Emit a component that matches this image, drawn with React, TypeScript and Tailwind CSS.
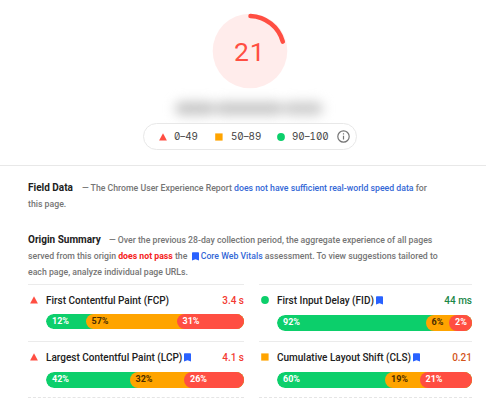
import clsx from "clsx";

type Level = "poor" | "average" | "good";

const metrics = [
  {
    name: "First Contentful Paint (FCP)",
    value: "3.4 s",
    level: "poor" as Level,
    valueColor: "text-[#f33a31]",
    vital: false,
    bar: [12, 57, 31],
    offsets: [0, 39.5, 130.5],
    barSize: "h-[15px]",
  },
  {
    name: "First Input Delay (FID)",
    value: "44 ms",
    level: "good" as Level,
    valueColor: "text-[#1b8748]",
    vital: true,
    bar: [92, 6, 2],
    offsets: [0, 148.5, 172],
    barSize: "mt-px h-[15.5px]",
  },
  {
    name: "Largest Contentful Paint (LCP)",
    value: "4.1 s",
    level: "poor" as Level,
    valueColor: "text-[#f33a31]",
    vital: true,
    bar: [42, 32, 26],
    offsets: [0, 83.5, 138],
    barSize: "mt-px h-[15.5px]",
  },
  {
    name: "Cumulative Layout Shift (CLS)",
    value: "0.21",
    level: "average" as Level,
    valueColor: "text-[#d3561c]",
    vital: true,
    bar: [60, 19, 21],
    offsets: [0, 108, 142.5],
    barSize: "mt-px h-[15.5px]",
  },
];

const segmentStyles = [
  "bg-[#0ccf6b] text-white",
  "bg-[#ffa400] text-[#4a2c00]",
  "bg-[#ff4e42] text-white",
];

const LevelIcon = ({ level }: { level: Level }) => (
  <svg width="8" height="8" viewBox="0 0 8 8" className="shrink-0">
    {level === "poor" && <path d="M4 0.3L7.9 7.6H0.1Z" fill="#ff4e42" />}
    {level === "average" && <path d="M0.2 0.4H7.6V7.6H0.2Z" fill="#ffa400" />}
    {level === "good" && <circle cx="4" cy="4" r="3.9" fill="#0ccf6b" />}
  </svg>
);

const Bookmark = ({ className }: { className?: string }) => (
  <svg width="7" height="9" viewBox="0 0 7 9" className={clsx("shrink-0", className)}>
    <path d="M0.8 0.3H6.2Q7 0.3 7 1V8.6L3.5 7.2L0 8.6V1Q0 0.3 0.8 0.3Z" fill="#2962ff" />
  </svg>
);

const Gauge = () => (
  <svg width="76" height="76" viewBox="0 0 76 76">
    <circle cx="38" cy="38" r="37.3" fill="#ffeceb" />
    <path
      d="M38.5 3A35 35 0 0 1 70.8 28.6"
      fill="none"
      stroke="#ff4e42"
      strokeWidth="4.5"
      strokeLinecap="round"
    />
    <text
      x="37.8"
      y="48.3"
      textAnchor="middle"
      fill="#ff4e42"
      className="font-['Roboto',sans-serif] text-[26.5px] tracking-[1px]"
    >
      21
    </text>
  </svg>
);

const Legend = () => (
  <div className="flex h-[27px] w-[214px] items-center rounded-full border border-[#e8e8e8] bg-white pl-[14.5px] font-['Inter',sans-serif] text-[9.8px] text-[#424242] slashed-zero tabular-nums">
    <LevelIcon level="poor" />
    <span className="ml-[7.5px] w-[41px] pt-[2px]">0–49</span>
    <LevelIcon level="average" />
    <span className="ml-[8px] w-[46px] pt-[2px]">50–89</span>
    <LevelIcon level="good" />
    <span className="ml-[7px] w-[45px] pt-[2px]">90–100</span>
    <svg width="13" height="13" viewBox="0 0 13 13" fill="none" stroke="#757575">
      <circle cx="6.5" cy="6.5" r="5.7" strokeWidth="1.2" />
      <path d="M6.5 5.7V9.6M6.5 3.3V4.6" strokeWidth="1.2" />
    </svg>
  </div>
);

const Metric = ({ metric }: { metric: (typeof metrics)[number] }) => (
  <div className="h-[57px] border-t border-[#ebebeb]">
    <div className="flex h-[29px] items-center pt-px pl-[2px]">
      <LevelIcon level={metric.level} />
      <span className="ml-[8px] text-[10px] font-medium text-[#212121]">{metric.name}</span>
      {metric.vital && <Bookmark className="ml-[2px]" />}
      <span className={clsx("ml-auto text-[10px] font-medium", metric.valueColor)}>
        {metric.value}
      </span>
    </div>
    <div className={clsx("relative ml-[18px] overflow-hidden rounded-full", metric.barSize)}>
      {metric.bar.map((percent, i) => (
        <div
          key={i}
          className={clsx(
            "absolute inset-y-0 right-0 flex items-center rounded-l-full pl-[6px] text-[9px] font-bold",
            segmentStyles[i]
          )}
          style={{ left: metric.offsets[i] }}
        >
          {percent}%
        </div>
      ))}
    </div>
  </div>
);

const App = () => {
  return (
    <div className="h-[412px] w-[486px] overflow-hidden bg-white font-['Roboto',sans-serif] whitespace-nowrap">
      {/* Score */}
      <div className="flex h-[166px] flex-col items-center border-b border-[#e8e8e8] pt-[13px] pl-[14px]">
        <Gauge />
        <div className="mt-[8px] flex h-[23px] w-[160px] items-center px-[5px] blur-[6px]">
          <div className="h-[13px] w-10 rounded-full bg-[#c4c4c4]" />
          <div className="h-[13px] w-17 rounded-full bg-[#c6c6c6]" />
          <div className="h-[13px] w-10 rounded-full bg-[#cbcbcb]" />
        </div>
        <div className="relative mt-[3px]">
          <Legend />
        </div>
      </div>

      {/* Field data */}
      <div className="h-[118px] pt-[14px] pl-[28px] text-[8.73px] leading-[16px] font-medium text-[#757575]">
        <p className="h-[52px]">
          <span className="mr-[9px] text-[10px] font-bold text-[#212121]">Field Data</span>
          — The Chrome User Experience Report{" "}
          <span className="text-[#3367d6]">does not have sufficient real-world speed data</span> for
          <br />
          this page.
        </p>
        <p>
          <span className="mr-[8px] text-[10px] font-bold text-[#212121]">Origin Summary</span>
          — Over the previous 28-day collection period, the aggregate experience of all pages
          <br />
          served from this origin <span className="font-bold text-[#f5221b]">does not pass</span> the{" "}
          <Bookmark className="ml-[2px] inline align-[-2px]" />{" "}
          <span className="text-[#3367d6]">Core Web Vitals</span> assessment. To view suggestions
          tailored to
          <br />
          each page, analyze individual page URLs.
        </p>
      </div>

      {/* Metrics */}
      <div className="ml-[28px] grid grid-cols-[216px_213px] gap-x-[15px]">
        {metrics.map((metric) => (
          <Metric key={metric.name} metric={metric} />
        ))}
        <div className="-mt-px border-t border-dashed border-[#e5e5e5]" />
        <div className="-mt-px border-t border-dashed border-[#e5e5e5]" />
      </div>
    </div>
  );
};

export default App;
